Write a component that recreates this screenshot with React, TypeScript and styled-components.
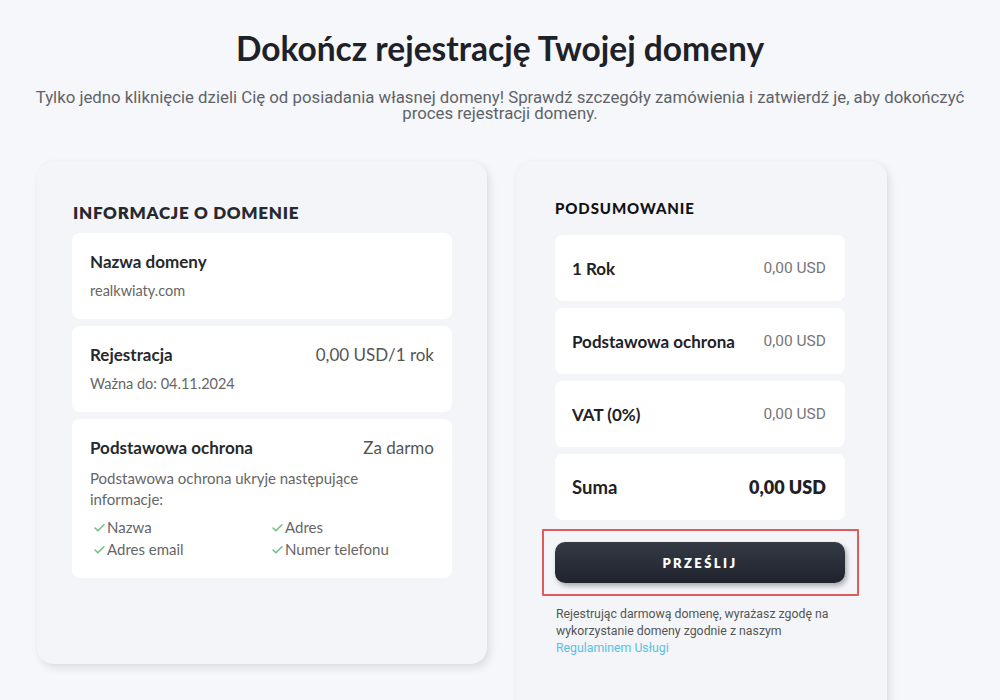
import styled, { createGlobalStyle } from 'styled-components';

const GlobalStyle = createGlobalStyle`
  html, body {
    margin: 0;
    padding: 0;
    background: #f5f7fa;
  }
  body {
    font-family: Lato, "Liberation Sans", sans-serif;
    color: #222;
  }
`;

const CheckIcon = () => (
  <svg width="13" height="13" viewBox="0 0 16 16" fill="none">
    <path d="M2.5 8.5 L6 12 L13.5 4.5" stroke="#6bbf7f" strokeWidth="1.8" strokeLinecap="round" strokeLinejoin="round" />
  </svg>
);

const summaryRows = [
  { label: '1 Rok', value: '0,00 USD' },
  { label: 'Podstawowa ochrona', value: '0,00 USD' },
  { label: 'VAT (0%)', value: '0,00 USD' },
];

const hidden = ['Nazwa', 'Adres', 'Adres email', 'Numer telefonu'];

export default function App() {
  return (
    <St.Page>
      <GlobalStyle />
      <St.Header>
        <St.Title>Dokończ rejestrację Twojej domeny</St.Title>
        <St.Subtitle>
          Tylko jedno kliknięcie dzieli Cię od posiadania własnej domeny! Sprawdź szczegóły zamówienia i zatwierdź je, aby dokończyć proces rejestracji domeny.
        </St.Subtitle>
      </St.Header>

      <St.Columns>
        <St.InfoPanel>
          <St.PanelHeading>INFORMACJE O DOMENIE</St.PanelHeading>
          <St.CardList>
            <St.InfoCard>
              <St.CardRow>
                <St.CardTitle>Nazwa domeny</St.CardTitle>
              </St.CardRow>
              <St.CardText>realkwiaty.com</St.CardText>
            </St.InfoCard>
            <St.InfoCard>
              <St.CardRow>
                <St.CardTitle>Rejestracja</St.CardTitle>
                <St.CardValue>0,00 USD/1 rok</St.CardValue>
              </St.CardRow>
              <St.CardText>Ważna do: 04.11.2024</St.CardText>
            </St.InfoCard>
            <St.InfoCard>
              <St.CardRow>
                <St.CardTitle>Podstawowa ochrona</St.CardTitle>
                <St.CardValue>Za darmo</St.CardValue>
              </St.CardRow>
              <St.Description>
                Podstawowa ochrona ukryje następujące<br />informacje:
              </St.Description>
              <St.CheckList>
                {hidden.map((item) => (
                  <St.CheckItem key={item}>
                    <CheckIcon />
                    {item}
                  </St.CheckItem>
                ))}
              </St.CheckList>
            </St.InfoCard>
          </St.CardList>
        </St.InfoPanel>

        <St.SummaryPanel>
          <St.SummaryHeading>PODSUMOWANIE</St.SummaryHeading>
          <St.CardList>
            {summaryRows.map((row) => (
              <St.SummaryRow key={row.label}>
                <St.SummaryLabel>{row.label}</St.SummaryLabel>
                <St.SummaryValue>{row.value}</St.SummaryValue>
              </St.SummaryRow>
            ))}
            <St.SummaryRow>
              <St.SummaryLabel $total>Suma</St.SummaryLabel>
              <St.SummaryValue $total>0,00 USD</St.SummaryValue>
            </St.SummaryRow>
          </St.CardList>
          <St.Highlight>
            <St.SubmitButton>PRZEŚLIJ</St.SubmitButton>
          </St.Highlight>
          <St.Terms>
            Rejestrując darmową domenę, wyrażasz zgodę na<br />
            wykorzystanie domeny zgodnie z naszym<br />
            <St.TermsLink href="#">Regulaminem Usługi</St.TermsLink>
          </St.Terms>
        </St.SummaryPanel>
      </St.Columns>
    </St.Page>
  );
}

const St = {
  Page: styled.div`
    width: 1000px;
    height: 700px;
    overflow: hidden;
    background: #f5f7fa;
  `,
  Header: styled.div`
    display: flex;
    flex-direction: column;
    align-items: center;
    padding: 29px 20px 0;
  `,
  Title: styled.h1`
    margin: 0;
    font-size: 33.5px;
    font-weight: 700;
    color: #1e2127;
    line-height: 38px;
  `,
  Subtitle: styled.p`
    max-width: 950px;
    margin: 22px 0 0;
    font-family: Roboto, "Liberation Sans", sans-serif;
    font-size: 16.8px;
    line-height: 16px;
    color: #5f6368;
    text-align: center;
  `,
  Columns: styled.div`
    display: flex;
    align-items: flex-start;
    gap: 29px;
    padding: 40px 0 0 37px;
  `,
  InfoPanel: styled.div`
    width: 450px;
    height: 503px;
    box-sizing: border-box;
    padding: 42px 35px 0;
    background: #f3f5f8;
    border-radius: 16px;
    box-shadow: 3px 4px 8px rgba(0, 0, 0, 0.1), 0 0 2px rgba(0, 0, 0, 0.04);
  `,
  SummaryPanel: styled.div`
    width: 371px;
    height: 600px;
    box-sizing: border-box;
    padding: 38px 42px 0 39px;
    background: #f3f5f8;
    border-radius: 16px;
    box-shadow: 3px 4px 8px rgba(0, 0, 0, 0.1), 0 0 2px rgba(0, 0, 0, 0.04);
  `,
  PanelHeading: styled.h2`
    margin: 0 0 10px 1px;
    font-size: 17px;
    font-weight: 800;
    letter-spacing: 0.7px;
    color: #26292e;
    line-height: 20px;
  `,
  SummaryHeading: styled.h2`
    margin: 0 0 18px;
    font-size: 15px;
    font-weight: 900;
    letter-spacing: 0.9px;
    color: #111;
    line-height: 18px;
  `,
  CardList: styled.div`
    display: flex;
    flex-direction: column;
    gap: 7px;
  `,
  InfoCard: styled.div`
    background: #fff;
    border-radius: 8px;
    padding: 19px 18px 20px;
  `,
  CardRow: styled.div`
    display: flex;
    justify-content: space-between;
    align-items: center;
  `,
  CardTitle: styled.div`
    font-size: 17px;
    font-weight: 700;
    color: #26292e;
    line-height: 20px;
  `,
  CardValue: styled.div`
    font-size: 17px;
    color: #555;
    line-height: 20px;
  `,
  CardText: styled.div`
    margin-top: 11px;
    font-size: 14.5px;
    color: #666;
    line-height: 16px;
  `,
  Description: styled.div`
    margin-top: 10px;
    font-size: 15px;
    color: #666;
    line-height: 21px;
  `,
  CheckList: styled.div`
    display: grid;
    grid-template-columns: 178px 1fr;
    row-gap: 4px;
    margin-top: 8px;
    padding-left: 3px;
  `,
  CheckItem: styled.div`
    display: flex;
    align-items: center;
    gap: 1px;
    font-size: 15px;
    color: #666;
    line-height: 18px;
  `,
  SummaryRow: styled.div`
    display: flex;
    justify-content: space-between;
    align-items: center;
    height: 66px;
    box-sizing: border-box;
    padding: 0 19px 0 17px;
    background: #fff;
    border-radius: 8px;
  `,
  SummaryLabel: styled.div<{ $total?: boolean }>`
    font-size: ${({ $total }) => ($total ? '18.5px' : '17px')};
    font-weight: 700;
    color: #1e2127;
  `,
  SummaryValue: styled.div<{ $total?: boolean }>`
    font-family: ${({ $total }) => ($total ? 'Lato, "Liberation Sans", sans-serif' : 'Roboto, "Liberation Sans", sans-serif')};
    font-size: ${({ $total }) => ($total ? '18px' : '15.5px')};
    font-weight: ${({ $total }) => ($total ? 800 : 400)};
    color: ${({ $total }) => ($total ? '#1e2127' : '#777')};
  `,
  Highlight: styled.div`
    margin: 9px -14px 0 -13px;
    padding: 11px 12px 11px 11px;
    border: 2px solid #e05b5b;
    border-radius: 1px;
  `,
  SubmitButton: styled.button`
    display: block;
    width: 100%;
    height: 41px;
    border: none;
    border-radius: 10px;
    background: linear-gradient(180deg, #353a45 0%, #1f232c 100%);
    box-shadow: 2px 3px 5px rgba(0, 0, 0, 0.3);
    color: #fff;
    font-family: Lato, "Liberation Sans", sans-serif;
    font-size: 13px;
    font-weight: 800;
    letter-spacing: 2.4px;
    cursor: pointer;
  `,
  Terms: styled.p`
    margin: 10px 0 0 1px;
    font-family: Roboto, "Liberation Sans", sans-serif;
    font-size: 12.3px;
    line-height: 17px;
    color: #555;
  `,
  TermsLink: styled.a`
    color: #5bbfe0;
    text-decoration: none;
  `,
};
